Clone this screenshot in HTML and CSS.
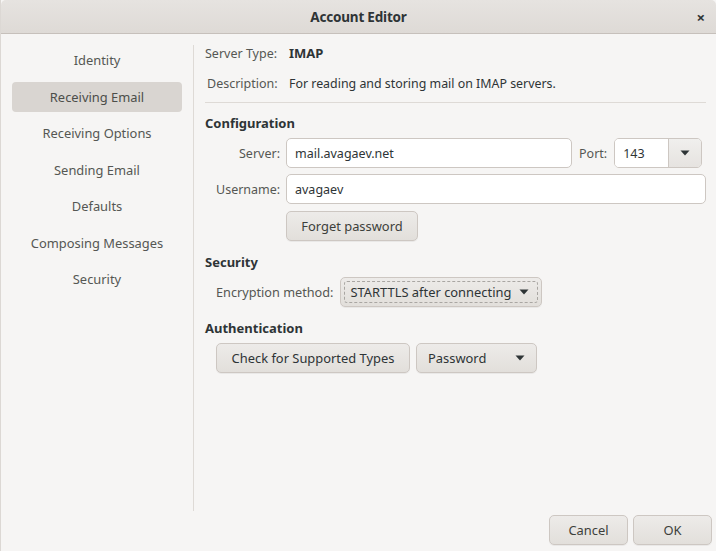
FILE: index.html
```html
<!DOCTYPE html>
<html>
<head>
<meta charset="utf-8">
<link rel="stylesheet" href="styles.css">
</head>
<body>
<div class="window">
  <div class="titlebar">
    <span class="title">Account Editor</span>
    <span class="close">×</span>
  </div>
  <div class="body">
    <nav class="sidebar">
      <div class="nav-item">Identity</div>
      <div class="nav-item selected">Receiving Email</div>
      <div class="nav-item">Receiving Options</div>
      <div class="nav-item">Sending Email</div>
      <div class="nav-item">Defaults</div>
      <div class="nav-item">Composing Messages</div>
      <div class="nav-item">Security</div>
    </nav>
    <div class="vsep"></div>
    <main class="content">
      <div class="info-row first"><span class="info-label">Server Type:</span><span class="info-value bold">IMAP</span></div>
      <div class="info-row"><span class="info-label desc">Description:</span><span class="info-value">For reading and storing mail on IMAP servers.</span></div>
      <div class="hsep"></div>
      <div class="heading h-config">Configuration</div>
      <div class="form">
        <div class="frow">
          <span class="flabel">Server:</span>
          <div class="entry server">mail.avagaev.net</div>
          <span class="port-label">Port:</span>
          <div class="combo-entry">
            <div class="ce-text">143</div>
            <div class="ce-btn"><svg width="10" height="6" viewBox="0 0 10 6"><path d="M0.5 0.5h9L5 5.5z" fill="#2e3436"/></svg></div>
          </div>
        </div>
        <div class="frow">
          <span class="flabel">Username:</span>
          <div class="entry user">avagaev</div>
        </div>
        <div class="frow">
          <span class="flabel"></span>
          <button class="btn forget">Forget password</button>
        </div>
      </div>
      <div class="heading h-sec">Security</div>
      <div class="sec-row">
        <span class="sec-label">Encryption method:</span>
        <button class="btn dropdown focus"><span class="focus-ring"><span>STARTTLS after connecting</span><svg width="10" height="6" viewBox="0 0 10 6"><path d="M0.5 0.5h9L5 5.5z" fill="#2e3436"/></svg></span></button>
      </div>
      <div class="heading h-auth">Authentication</div>
      <div class="auth-row">
        <button class="btn check">Check for Supported Types</button>
        <button class="btn dropdown pw"><span>Password</span><svg width="10" height="6" viewBox="0 0 10 6"><path d="M0.5 0.5h9L5 5.5z" fill="#2e3436"/></svg></button>
      </div>
    </main>
  </div>
  <div class="footer">
    <button class="btn fbtn cancel">Cancel</button>
    <button class="btn fbtn ok">OK</button>
  </div>
</div>
</body>
</html>
```

FILE: styles.css
```css
html, body {
  margin: 0;
  padding: 0;
  width: 716px;
  height: 551px;
  overflow: hidden;
  background: #f6f5f4;
  font-family: "Noto Sans", "DejaVu Sans", sans-serif;
  font-size: 12.5px;
  color: #2e3436;
}
.window {
  width: 716px;
  height: 551px;
  display: flex;
  flex-direction: column;
  background: #f6f5f4;
  box-sizing: border-box;
  border-left: 1px solid #dcd8d4;
}
.titlebar {
  height: 33px;
  flex: none;
  background: linear-gradient(#e6e3e0, #dedad6);
  border-bottom: 1px solid #c6c0bb;
  display: flex;
  align-items: center;
  justify-content: center;
  position: relative;
  border-radius: 5px 5px 0 0;
}
.title {
  font-weight: bold;
  font-size: 13.5px;
  color: #2e3436;
  letter-spacing: -0.2px;
}
.close {
  position: absolute;
  right: 11px;
  top: 7px;
  font-size: 15px;
  font-weight: bold;
  color: #2e3436;
}
.body {
  flex: none;
  height: 477px;
  display: flex;
}
.sidebar {
  width: 192px;
  flex: none;
  padding: 11px 11px 0 11px;
  box-sizing: border-box;
  display: flex;
  flex-direction: column;
  gap: 6.5px;
}
.nav-item {
  height: 30px;
  display: flex;
  align-items: center;
  justify-content: center;
  color: #555753;
  font-size: 12.9px;
  border-radius: 4px;
}
.nav-item.selected {
  background: #d9d5d1;
  color: #4c4e4a;
}
.vsep {
  width: 1px;
  flex: none;
  background: #dedad6;
  margin-top: 11px;
}
.content {
  flex: 1;
  padding: 0 10px 0 11px;
  box-sizing: border-box;
}
.info-row {
  display: flex;
  align-items: center;
  height: 20px;
  margin-top: 10px;
}
.info-row.first {
  margin-top: 9px;
}
.info-label {
  width: 84px;
  flex: none;
  color: #555753;
}
.info-label.desc {
  padding-left: 2px;
  width: 82px;
}
.info-value {
  font-size: 12.4px;
}
.info-value.bold {
  font-weight: bold;
  font-size: 13px;
}
.hsep {
  height: 1px;
  background: #dedad6;
  margin-top: 9px;
}
.heading {
  font-weight: bold;
  font-size: 13px;
  height: 20px;
  display: flex;
  align-items: center;
}
.h-config { margin-top: 10px; }
.h-sec { margin-top: 11px; }
.h-auth { margin-top: 11px; }
.form {
  display: flex;
  flex-direction: column;
  gap: 6px;
  margin-top: 5px;
  padding-left: 11px;
}
.frow {
  display: flex;
  align-items: center;
  gap: 6px;
}
.flabel {
  width: 64px;
  flex: none;
  text-align: right;
  color: #555753;
}
.entry {
  height: 30px;
  box-sizing: border-box;
  border: 1px solid #cdc7c2;
  border-radius: 5px;
  background: #fff;
  display: flex;
  align-items: center;
  padding-left: 8px;
  font-size: 12.5px;
}
.entry.server { width: 286px; }
.entry.user { width: 420px; }
.port-label {
  color: #555753;
  margin-left: 1px;
}
.combo-entry {
  width: 88px;
  height: 30px;
  box-sizing: border-box;
  border: 1px solid #cdc7c2;
  border-radius: 5px;
  display: flex;
  overflow: hidden;
  margin-left: 1px;
}
.ce-text {
  flex: 1;
  background: #fff;
  display: flex;
  align-items: center;
  padding-left: 8px;
  font-size: 12.5px;
}
.ce-btn {
  width: 32px;
  border-left: 1px solid #cdc7c2;
  background: linear-gradient(#f0efed, #e6e3e0);
  display: flex;
  align-items: center;
  justify-content: center;
}
.btn {
  font-family: inherit;
  font-size: 12.9px;
  color: #2e3436;
  height: 30px;
  box-sizing: border-box;
  border: 1px solid #cdc7c2;
  border-radius: 5px;
  background: linear-gradient(#edebe9, #e2dfdb);
  box-shadow: 0 1px rgba(0,0,0,0.05);
  padding: 0;
  display: flex;
  align-items: center;
  justify-content: center;
}
.btn.forget {
  width: 132px;
  height: 30px;
  margin-top: 1px;
  color: #3d3f3b;
}
.sec-row {
  display: flex;
  align-items: center;
  gap: 6px;
  margin-top: 5px;
  padding-left: 11px;
}
.sec-label {
  color: #555753;
  font-size: 12.7px;
}
.btn.dropdown.focus {
  width: 202px;
  padding: 3px;
}
.focus-ring {
  flex: 1;
  align-self: stretch;
  border: 1px dashed #a9a6a2;
  border-radius: 3px;
  display: flex;
  align-items: center;
  justify-content: space-between;
  padding: 0 8px 0 6px;
}
.auth-row {
  display: flex;
  gap: 6px;
  margin-top: 5px;
  padding-left: 11px;
}
.btn.check {
  width: 194px;
}
.btn.pw {
  width: 121px;
  justify-content: space-between;
  padding: 0 11px 0 11px;
}
.footer {
  flex: 1;
  display: flex;
  justify-content: flex-end;
  align-items: flex-start;
  gap: 5px;
  padding: 4px 4px 0 0;
}
.fbtn.cancel { width: 79px; color: #3d3f3b; }
.fbtn.ok { width: 79px; color: #3d3f3b; }
```
